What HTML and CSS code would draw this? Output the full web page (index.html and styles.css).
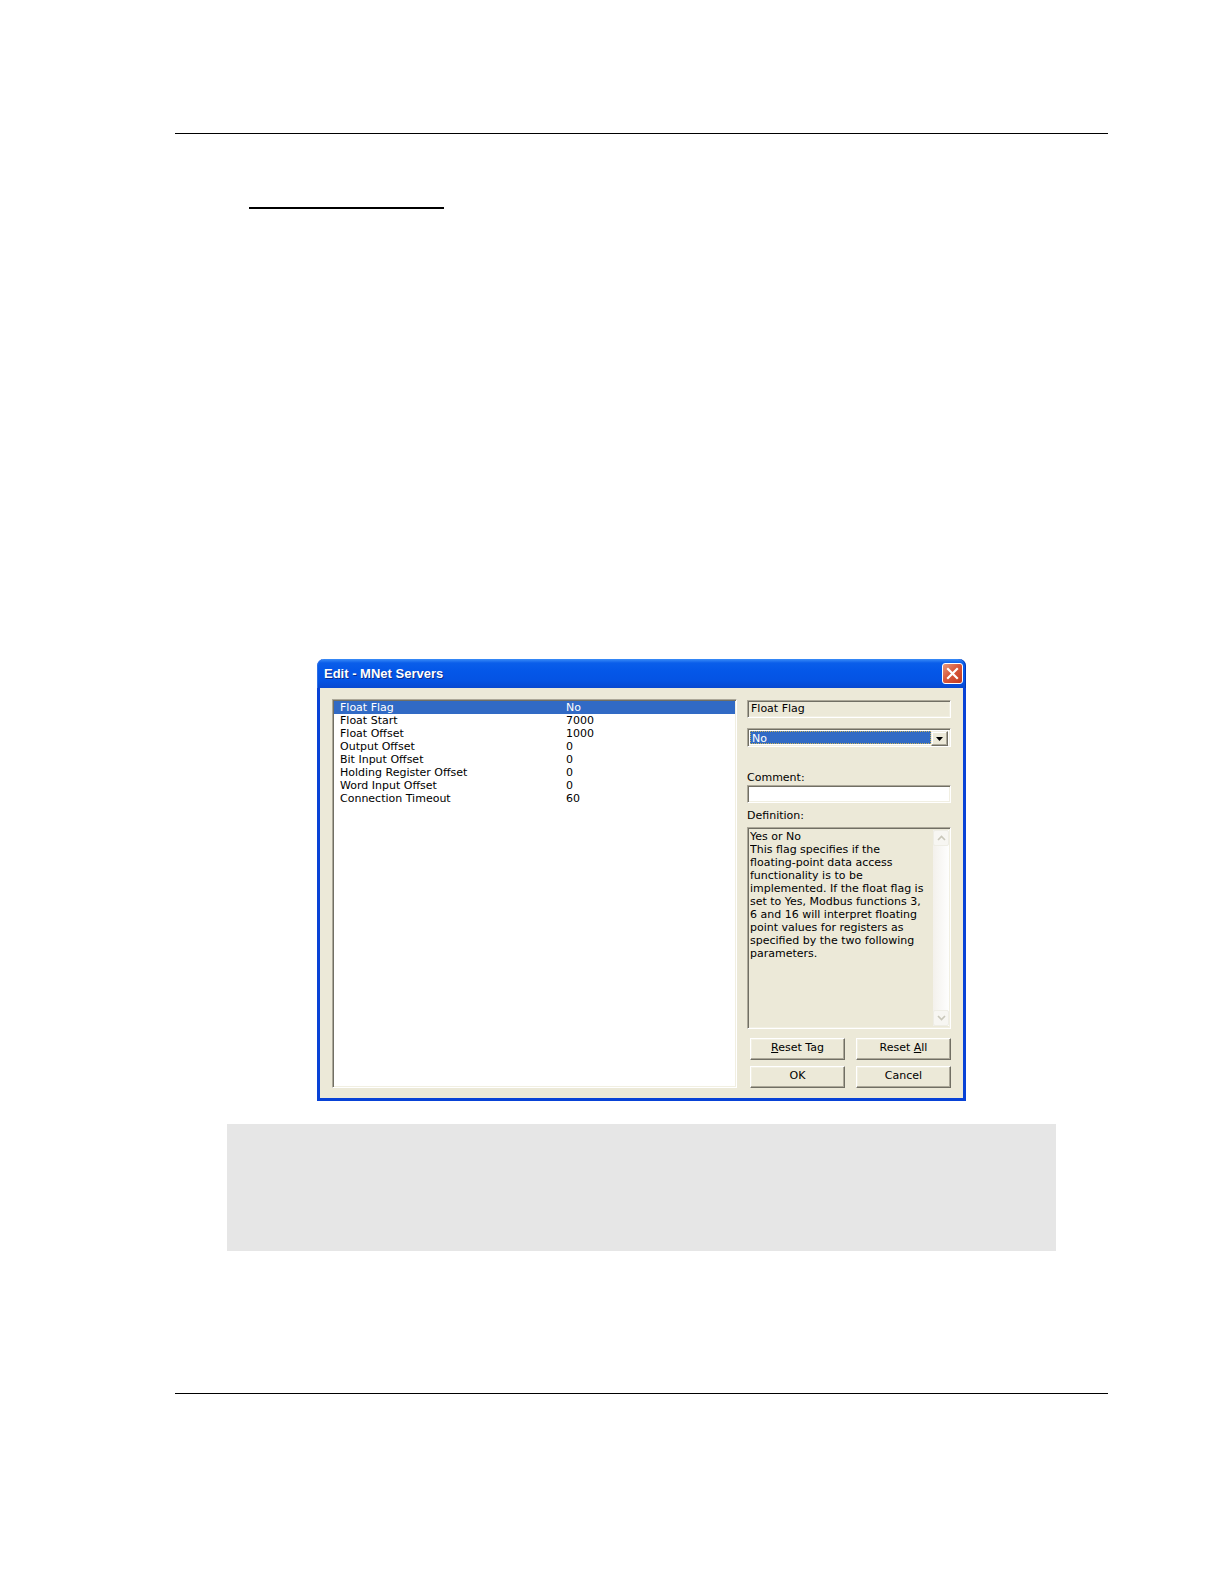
FILE: index.html
```html
<!DOCTYPE html>
<html>
<head>
<meta charset="utf-8">
<link rel="stylesheet" href="styles.css">
</head>
<body>
<div class="page">
  <div class="rule rule-top"></div>
  <div class="heading-rule"></div>

  <div class="dialog">
    <div class="titlebar">
      <span class="title">Edit - MNet Servers</span>
      <span class="close">
        <svg width="13" height="13" viewBox="0 0 13 13"><path d="M2 2 L11 11 M11 2 L2 11" stroke="#fff" stroke-width="2.2" stroke-linecap="square"/></svg>
      </span>
    </div>
    <div class="dlg-body">
      <div class="list sunken">
        <div class="row selected"><span class="name">Float Flag</span><span class="val">No</span></div>
        <div class="row"><span class="name">Float Start</span><span class="val">7000</span></div>
        <div class="row"><span class="name">Float Offset</span><span class="val">1000</span></div>
        <div class="row"><span class="name">Output Offset</span><span class="val">0</span></div>
        <div class="row"><span class="name">Bit Input Offset</span><span class="val">0</span></div>
        <div class="row"><span class="name">Holding Register Offset</span><span class="val">0</span></div>
        <div class="row"><span class="name">Word Input Offset</span><span class="val">0</span></div>
        <div class="row"><span class="name">Connection Timeout</span><span class="val">60</span></div>
      </div>
      <div class="side">
        <div class="field sunken readonly">Float Flag</div>
        <div class="combo sunken">
          <div class="combo-value"><span class="focus">No</span></div>
          <div class="combo-btn">
            <svg width="7" height="4" viewBox="0 0 7 4"><path d="M0 0 H7 L3.5 4 Z" fill="#000"/></svg>
          </div>
        </div>
        <div class="label label-comment">Comment:</div>
        <div class="field sunken input"></div>
        <div class="label label-def">Definition:</div>
        <div class="definition sunken">
          <div class="def-text">
            <div>Yes or No</div>
            <div>This flag specifies if the</div>
            <div>floating-point data access</div>
            <div>functionality is to be</div>
            <div>implemented. If the float flag is</div>
            <div>set to Yes, Modbus functions 3,</div>
            <div>6 and 16 will interpret floating</div>
            <div>point values for registers as</div>
            <div>specified by the two following</div>
            <div>parameters.</div>
          </div>
          <div class="scrollbar">
            <div class="sb-btn">
              <svg width="9" height="6" viewBox="0 0 9 6"><path d="M1 5 L4.5 1.5 L8 5" fill="none" stroke="#C9C7BA" stroke-width="1.6"/></svg>
            </div>
            <div class="sb-track"></div>
            <div class="sb-btn">
              <svg width="9" height="6" viewBox="0 0 9 6"><path d="M1 1 L4.5 4.5 L8 1" fill="none" stroke="#C9C7BA" stroke-width="1.6"/></svg>
            </div>
          </div>
        </div>
        <div class="buttons">
          <div class="btn"><u>R</u>eset Tag</div>
          <div class="btn">Reset <u>A</u>ll</div>
          <div class="btn">OK</div>
          <div class="btn">Cancel</div>
        </div>
      </div>
    </div>
  </div>

  <div class="note"></div>
  <div class="rule rule-bottom"></div>
</div>
</body>
</html>
```

FILE: styles.css
```css
* { box-sizing: border-box; }
html, body { margin: 0; padding: 0; background: #fff; }
body { font-family: "DejaVu Sans", Verdana, sans-serif; font-size: 11px; color: #000; }

.page { padding-top: 133px; }

.rule { height: 1px; background: #000; margin-left: 175px; width: 933px; }
.heading-rule { margin-top: 73px; margin-left: 249px; width: 195px; height: 2px; background: #000; }

.dialog { margin-top: 450px; margin-left: 317px; width: 649px; height: 442px; display: flex; flex-direction: column; }

.titlebar {
  height: 29px;
  border-radius: 7px 7px 0 0;
  background: linear-gradient(to bottom, #3A8CF7 0px, #0A5EEA 4px, #0457E8 12px, #0453E3 22px, #0748D0 29px);
  display: flex; align-items: center; justify-content: space-between;
  padding: 0 3px 0 7px;
  box-shadow: inset 1px 0 0 #2C6EE6, inset -1px 0 0 #0038B8;
}
.title { font-family: "Liberation Sans", Arial, sans-serif; font-weight: bold; font-size: 13px; color: #fff; text-shadow: 1px 1px 0 #0A2C8C; }
.close {
  width: 21px; height: 21px; border-radius: 3px; border: 1px solid #fff;
  background: linear-gradient(135deg, #E89A7E 0%, #D9593C 45%, #C13A20 100%);
  display: flex; align-items: center; justify-content: center;
}

.dlg-body {
  flex: 1;
  background: #ECE9D8;
  border: 3px solid #0842D6; border-top: none;
  display: flex; gap: 10px;
  padding: 11px 12px 10px 12px;
}

.sunken {
  border: 1px solid; border-color: #ACA899 #fff #fff #ACA899;
  box-shadow: inset 1px 1px 0 #716F64, inset -1px -1px 0 #F1EFE2;
}

.list { width: 405px; height: 389px; background: #fff; padding: 1px 1px; }
.row { display: flex; height: 13px; line-height: 13px; padding-left: 6px; white-space: nowrap; }
.row .name { width: 226px; }
.row.selected { background: #316AC5; color: #fff; }

.side { width: 204px; display: flex; flex-direction: column; }
.field { height: 18px; line-height: 15px; padding-left: 3px; flex: none; }
.readonly { margin-top: 1px; background: #ECE9D8; }
.input { background: #fff; }

.combo { margin-top: 10px; height: 19px; background: #fff; display: flex; padding: 2px; flex: none; }
.combo-value { flex: 1; background: #316AC5; color: #fff; border: 1px dotted #C9B25A; line-height: 13px; padding-left: 1px; }
.combo-btn {
  width: 17px; height: 15px;
  background: #ECE9D8;
  border: 1px solid; border-color: #F1EFE2 #716F64 #716F64 #F1EFE2;
  box-shadow: inset -1px -1px 0 #ACA899, inset 1px 1px 0 #fff;
  display: flex; align-items: center; justify-content: center;
}

.label { height: 14px; line-height: 14px; flex: none; }
.label-comment { margin-top: 24px; }
.label-def { margin-top: 6px; margin-bottom: 4px; }

.definition { height: 202px; flex: none; background: #ECE9D8; display: flex; padding: 2px 1px 2px 2px; }
.def-text { flex: 1; line-height: 13px; white-space: nowrap; overflow: hidden; }
.scrollbar { width: 16px; display: flex; flex-direction: column; background: linear-gradient(to right, #F3F1EC, #FEFEFE); }
.sb-btn { height: 16px; border: 1px solid #EEEDE5; border-radius: 2px; background: #F7F6F2; display: flex; align-items: center; justify-content: center; }
.sb-track { flex: 1; }

.buttons { margin-top: 9px; margin-left: 3px; display: grid; grid-template-columns: 95px 95px; column-gap: 11px; row-gap: 6px; }
.btn {
  height: 22px; line-height: 18px; text-align: center;
  background: #ECE9D8;
  border: 1px solid; border-color: #fff #716F64 #716F64 #fff;
  box-shadow: inset -1px -1px 0 #ACA899, inset 1px 1px 0 #F1EFE2;
}
.btn u { text-decoration: underline; text-underline-offset: 1px; }

.note { margin-top: 23px; margin-left: 227px; width: 829px; height: 127px; background: #E6E6E6; }
.rule-bottom { margin-top: 142px; }
```
